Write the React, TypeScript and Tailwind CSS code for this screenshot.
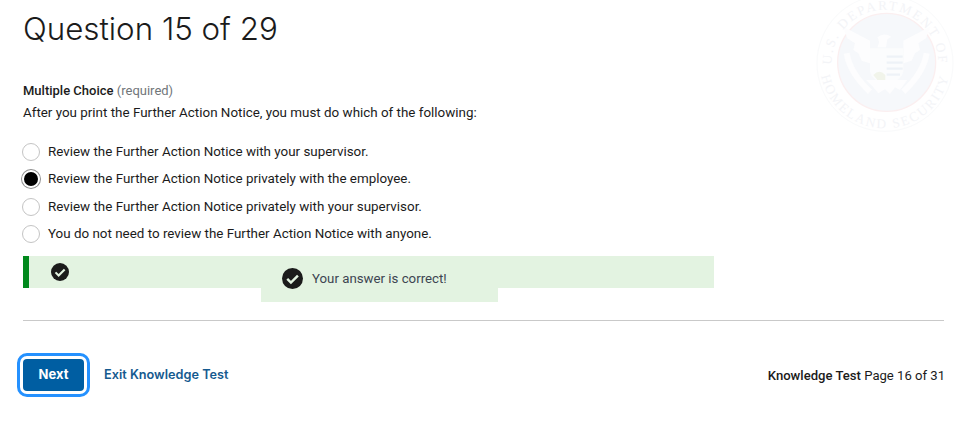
const inter = { fontFamily: '"Inter", "Liberation Sans", sans-serif' };
const roboto = { fontFamily: 'Roboto, "Liberation Sans", sans-serif' };

function Check({ size }: { size: number }) {
  return (
    <svg width={size} height={size} viewBox="0 0 24 24" className="shrink-0">
      <circle cx="12" cy="12" r="12" fill="#1b1b1b" />
      <path d="M6 12.5l4.2 4.2L18.2 8.6" fill="none" stroke="#e3f3e1" strokeWidth="2.8" />
    </svg>
  );
}

function Seal() {
  const serif = { fontFamily: '"Liberation Serif", serif', letterSpacing: 6 };
  return (
    <svg width="167" height="140" viewBox="0 0 501 420" className="absolute left-[790px] top-0">
      <defs>
        <path id="sealTop" d="M135 245 A160 160 0 1 1 435 245" />
        <path id="sealBot" d="M90 190 A195 195 0 0 0 480 190" />
      </defs>
      <circle cx="285" cy="190" r="204" fill="none" stroke="#f9fafb" strokeWidth="3" />
      <circle cx="290" cy="187" r="147" fill="#f6f8fb" stroke="#fbeff0" strokeWidth="4" />
      <path d="M160 80 L240 122 L240 190 L215 182 L205 160 L190 150 L195 130 L172 115 Z" fill="#fdfdfe" />
      <path d="M420 80 L340 122 L340 190 L365 182 L375 160 L390 150 L385 130 L408 115 Z" fill="#fdfdfe" />
      <path d="M262 112 Q282 96 304 110 L292 118 L288 142 H262 Q272 124 262 112 Z" fill="#fdfdfe" />
      <path d="M240 145 H340 V215 Q336 240 290 256 Q244 240 240 215 Z" fill="#fbfcfd" />
      <path d="M250 225 Q268 205 286 225 V240 H262 Z" fill="#f1f4ea" />
      <path d="M290 170 H338 M290 188 H338 M290 206 H338 M290 224 H330" stroke="#eef2f7" strokeWidth="7" fill="none" />
      <path d="M170 160 Q180 220 240 275 M410 160 Q400 220 340 275" stroke="#fdfdfe" strokeWidth="18" fill="none" />
      <path d="M228 240 L352 240 L330 270 L315 262 L300 282 L285 268 L265 280 L250 262 Z" fill="#fdfdfe" />
      <text fontSize="40" fill="#f3f4f7" textAnchor="middle" style={serif}>
        <textPath href="#sealTop" startOffset="50%">U.S. DEPARTMENT OF</textPath>
      </text>
      <text fontSize="40" fill="#f3f4f7" textAnchor="middle" style={serif}>
        <textPath href="#sealBot" startOffset="50%">HOMELAND SECURITY</textPath>
      </text>
    </svg>
  );
}

function Option({ label, checked }: { label: string; checked?: boolean }) {
  return (
    <label className="flex items-center h-[27.3px]">
      {checked ? (
        <span className="w-[14px] h-[14px] rounded-full bg-black ml-[24px] mr-[10px] shadow-[0_0_0_2px_#fff,0_0_0_3px_#8f8f8f]" />
      ) : (
        <span className="w-[18px] h-[18px] rounded-full bg-white border border-[#c4c4c4] ml-[22px] mr-[8px] box-border" />
      )}
      <span className="text-[13.4px] leading-5 text-[#1b1b1b]">{label}</span>
    </label>
  );
}

export default function App() {
  return (
    <div style={roboto} className="relative w-[957px] h-[423px] overflow-hidden bg-white text-[#1b1b1b]">
      <Seal />
      <div className="relative px-[23px] pt-[9px]">
        <h1 style={inter} className="text-[31.3px] leading-10 font-light">Question 15 of 29</h1>
        <p className="mt-[32px] text-[13px] leading-5 font-medium">
          Multiple Choice <span className="font-normal text-[#71767a]">(required)</span>
        </p>
        <p className="mt-[2px] text-[13.4px] leading-5">After you print the Further Action Notice, you must do which of the following:</p>
      </div>
      <div className="relative mt-[15.4px]">
        <Option label="Review the Further Action Notice with your supervisor." />
        <Option label="Review the Further Action Notice privately with the employee." checked />
        <Option label="Review the Further Action Notice privately with your supervisor." />
        <Option label="You do not need to review the Further Action Notice with anyone." />
      </div>
      <div className="relative mt-[8.6px] ml-[23px] w-[691px] h-8 bg-[#e3f3e1] border-l-[6px] border-[#00891c] flex items-center pl-[22px]">
        <Check size={18} />
        <div className="absolute left-[232px] top-[8px] w-[237px] h-[38px] bg-[#e3f3e1] flex items-start pl-[21px] pt-[4px]">
          <Check size={21} />
          <span className="ml-[9px] mt-[1px] text-[13.25px] leading-5 text-[#3d4551]">Your answer is correct!</span>
        </div>
      </div>
      <div className="ml-[23px] mr-[13px] mt-[32px] border-t border-[#c9c9c9]" />
      <div className="flex items-center justify-between pl-[23px] pr-[13px] mt-[38px]">
        <div className="flex items-center">
          <button style={inter} className="w-[61px] h-[32px] rounded bg-[#005ea2] text-white text-[13px] font-bold outline-[3px] outline-offset-[3px] outline-[#2491ff]">Next</button>
          <a style={inter} className="ml-[20px] -mt-[1px] text-[12.7px] font-semibold text-[#155a8f]">Exit Knowledge Test</a>
        </div>
        <div className="text-[13.1px] leading-5 mt-[1px] translate-x-[1px]">
          <span className="font-medium">Knowledge Test</span> Page 16 of 31
        </div>
      </div>
    </div>
  );
}
